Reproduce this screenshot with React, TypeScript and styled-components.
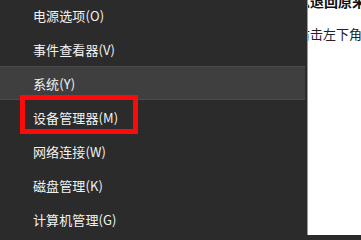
import React from "react";
import styled, { createGlobalStyle } from "styled-components";

const Global = createGlobalStyle`
  html, body { margin: 0; padding: 0; background: #2b2b2b; }
  body { width: 361px; height: 235px; overflow: hidden; }
  #root { height: 235px; }
`;

const Screen = styled.div`
  display: flex;
  width: 361px;
  height: 235px;
  overflow: hidden;
  font-family: "Noto Sans CJK SC", "Noto Sans", sans-serif;
`;

const Menu = styled.div`
  width: 307px;
  flex: none;
  background: #2b2b2b;
  padding-right: 2px;
  box-sizing: border-box;
  overflow: hidden;
`;

const List = styled.ul`
  list-style: none;
  margin: -2px 0 0 0;
  padding: 0;
`;

const Row = styled.li<{ $hover?: boolean }>`
  position: relative;
  height: 34px;
  box-sizing: border-box;
  display: flex;
  align-items: center;
  padding-left: 33px;
  color: #f2f2f2;
  font-size: 13px;
  letter-spacing: 0.1px;
  background: ${(p) => (p.$hover ? "#3f3f3f" : "transparent")};
  border-top: 1px solid ${(p) => (p.$hover ? "#4b4b4b" : "transparent")};
  border-bottom: 1px solid ${(p) => (p.$hover ? "#4b4b4b" : "transparent")};
`;

const Highlight = styled.span`
  position: absolute;
  left: 20px;
  top: -6px;
  width: 118px;
  height: 39px;
  border: 5px solid #ff0a0a;
  box-sizing: border-box;
  pointer-events: none;
`;

const Divider = styled.div`
  width: 1px;
  flex: none;
  background: #9a9a9a;
`;

const Article = styled.div`
  flex: 1;
  background: #ffffff;
  overflow: hidden;
  position: relative;
`;

const Title = styled.div`
  margin: -9px 0 0 -12px;
  white-space: nowrap;
  font-size: 14px;
  font-weight: 700;
  line-height: 20px;
  color: #111;
`;

const Para = styled.div`
  margin: 13px 0 0 -11px;
  white-space: nowrap;
  font-size: 13px;
  line-height: 20px;
  color: #222;
`;

const items = [
  "电源选项(O)",
  "事件查看器(V)",
  "系统(Y)",
  "设备管理器(M)",
  "网络连接(W)",
  "磁盘管理(K)",
  "计算机管理(G)",
];

export default function App() {
  return (
    <>
      <Global />
      <Screen>
        <Menu>
          <List>
            {items.map((t, i) => (
              <Row key={t} $hover={i === 2}>
                {t}
                {i === 3 && <Highlight />}
              </Row>
            ))}
          </List>
        </Menu>
        <Divider />
        <Article>
          <Title>么退回原来系统</Title>
          <Para>右击左下角开始菜单</Para>
        </Article>
      </Screen>
    </>
  );
}
